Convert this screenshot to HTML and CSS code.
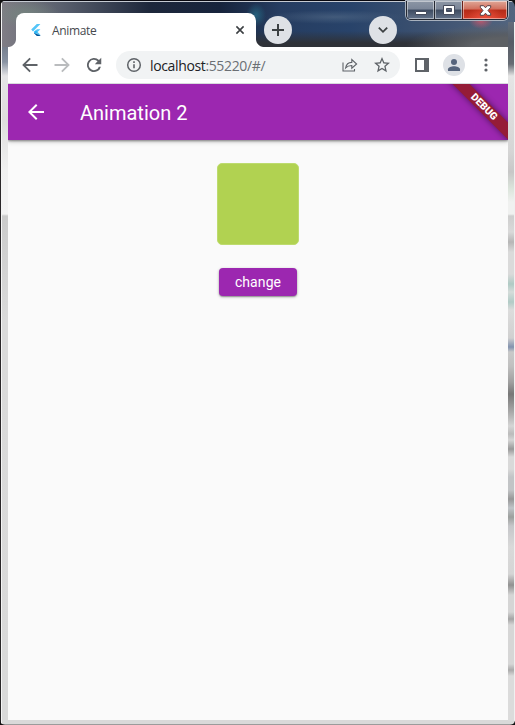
FILE: index.html
```html
<!DOCTYPE html>
<html lang="en">
<head>
<meta charset="utf-8">
<title>Animate</title>
<link rel="stylesheet" href="styles.css">
</head>
<body>
<div class="window">
  <div class="glass-right"></div>
  <header class="tabstrip">
    <div class="tab">
      <svg class="favicon" width="12" height="12" viewBox="0 0 12 12"><path fill="#54c5f8" d="M6.8 0H10.400L3 7.400 1.200 5.600zM6.800 5.200h3.600L7.600 8l2.800 2.800-2 .2L4.900 8z"/><path fill="#01579b" d="M5 8.200 6.900 10l3.500 1.500v.5H6.800L4 9.300z"/><path fill="#29b6f6" d="M3.700 8 5.600 6.200 7.500 8 5.600 9.900z"/></svg>
      <span class="tab-title">Animate</span>
      <svg class="tab-close" width="10" height="10" viewBox="0 0 10 10"><path d="M1.400 1.400l7.200 7.200M8.600 1.400L1.400 8.600" stroke="#3c4043" stroke-width="1.600"/></svg>
    </div>
    <div class="round new-tab"><svg width="12" height="12" viewBox="0 0 12 12"><path d="M6 0v12M0 6h12" stroke="#3c4043" stroke-width="2"/></svg></div>
    <div class="round search-tabs"><svg width="10" height="8" viewBox="0 0 10 8"><path d="M.8 1.600L5 5.800l4.200-4.200" fill="none" stroke="#3c4043" stroke-width="1.800"/></svg></div>
    <div class="caption">
      <div class="cap min"><svg width="12" height="6" viewBox="0 0 12 6"><path d="M.5 1.500h11v3H.5z" fill="#fff" stroke="#454b5c"/></svg></div>
      <div class="cap max"><svg width="12" height="10" viewBox="0 0 12 10"><path fill="#fff" fill-rule="evenodd" stroke="#454b5c" d="M.5.500h11v9H.5zM3.500 3.500v3h5v-3z"/></svg></div>
      <div class="cap close"><svg width="13" height="11" viewBox="0 0 13 11"><path fill="#fff" stroke="#554047" d="M1.300.700h3.300l1.900 2.100L8.400.700h3.300v1.600L9 5.500l2.700 3.200v1.600H8.400L6.500 8.200l-1.900 2.100H1.300V8.700L4 5.500 1.300 2.300z"/></svg></div>
    </div>
  </header>
  <main class="content">
    <nav class="toolbar">
      <svg class="nav-icon" width="20" height="20" viewBox="0 0 24 24"><path fill="#5f6368" d="M21 10.800H7l6-6L11.400 3.200 2.600 12l8.800 8.800L13 19.200l-6-6h14z"/></svg>
      <svg class="nav-icon" width="20" height="20" viewBox="0 0 24 24"><path fill="#babcbe" d="M3 10.800h14l-6-6 1.600-1.600 8.800 8.800-8.800 8.800-1.600-1.600 6-6H3z"/></svg>
      <svg class="nav-icon" width="20" height="20" viewBox="0 0 24 24"><path fill="#5f6368" d="M18 5.900A8.500 8.500 0 1 0 20.300 14h-2.500A6.200 6.200 0 1 1 16.300 7.600L13 11h7.700V3.200z"/></svg>
      <div class="omnibox">
        <svg class="info" width="16" height="16" viewBox="0 0 16 16"><circle cx="8" cy="8" r="6.300" fill="none" stroke="#5f6368" stroke-width="1.500"/><path d="M8 7.200v4M8 4.300v1.600" stroke="#5f6368" stroke-width="1.600"/></svg>
        <span class="url">localhost<span class="port">:55220/#/</span></span>
        <svg class="share" width="16" height="16" viewBox="0 0 16 16"><path d="M1 5.500V14h11.500v-2M3.600 11C4.200 7.500 6.400 5.500 9.800 5.400V2.600L14.600 7 9.800 11.200V8.500C7 8.500 5.200 9.200 3.600 11z" fill="none" stroke="#5f6368" stroke-width="1.100"/></svg>
        <svg class="star" width="16" height="16" viewBox="2 2 20 20"><path fill="#5f6368" d="M22 9.240l-7.190-.62L12 2 9.190 8.630 2 9.240l5.460 4.730L5.820 21 12 17.270 18.180 21l-1.630-7.030zM12 15.400l-3.760 2.270 1-4.280-3.320-2.880 4.380-.38L12 6.100l1.710 4.040 4.380.38-3.320 2.880 1 4.280z"/></svg>
      </div>
      <svg class="panel-icon" width="14" height="14" viewBox="0 0 14 14"><path fill="#5f6368" fill-rule="evenodd" d="M0 0h14v14H0zM2 2v10h7V2z"/></svg>
      <div class="avatar"><svg width="16" height="16" viewBox="0 0 16 16"><circle cx="8" cy="5" r="3" fill="#56647c"/><path fill="#56647c" d="M2 14v-1.700C2 10.200 5.500 9.300 8 9.300s6 .9 6 3V14z"/></svg></div>
      <svg class="menu" width="4" height="14" viewBox="0 0 4 14"><g fill="#5f6368"><circle cx="2" cy="2" r="1.600"/><circle cx="2" cy="7" r="1.600"/><circle cx="2" cy="12" r="1.600"/></g></svg>
    </nav>
    <section class="app">
      <div class="appbar">
        <svg width="24" height="24" viewBox="0 0 24 24"><path fill="#fff" d="M20 11H7.830l5.590-5.590L12 4l-8 8 8 8 1.410-1.410L7.830 13H20z"/></svg>
        <h1>Animation 2</h1>
        <div class="banner-clip"><div class="banner">DEBUG</div></div>
      </div>
      <div class="stage">
        <div class="box"></div>
        <button class="change">change</button>
      </div>
    </section>
  </main>
</div>
</body>
</html>
```
FILE: styles.css
```css
* { box-sizing: border-box; }
body { margin: 0; background: #111; overflow: hidden; }
svg { display: block; flex: none; }
.window {
  position: relative;
  width: 515px;
  height: 725px;
  padding: 0 7px 5px 8px;
  display: flex;
  flex-direction: column;
  overflow: hidden;
  border-radius: 7px 7px 5px 5px;
  background:
    linear-gradient(#08080f, #08080f) 0 0 / 100% 1px no-repeat,
    linear-gradient(#c5cad2, #c5cad2) 0 1px / 100% 1px no-repeat,
    linear-gradient(#2a2729, #2a2729) 0 0 / 1px 100% no-repeat,
    linear-gradient(#f4f4f4, #f4f4f4) 1px 0 / 1px 100% no-repeat,
    linear-gradient(#9b9b9b, #9b9b9b) 0 100% / 100% 1px no-repeat,
    radial-gradient(ellipse 34px 14px at 26px 14px, #75877fcc, transparent) 0 0 / 100% 47px no-repeat,
    radial-gradient(ellipse 10px 12px at 256px 15px, #267792aa, transparent) 0 0 / 100% 47px no-repeat,
    radial-gradient(ellipse 70px 7px at 335px 17px, #506784aa, transparent) 0 0 / 100% 47px no-repeat,
    radial-gradient(ellipse 12px 8px at 481px 21px, #d0566acc, transparent) 0 0 / 100% 47px no-repeat,
    radial-gradient(ellipse 110px 24px at 515px 47px, #5d6064 40%, transparent) 0 0 / 100% 47px no-repeat,
    linear-gradient(transparent 31px, #2f3238 43px) 250px 0 / 265px 47px no-repeat,
    linear-gradient(90deg, #817e86 0, #5a606e 60px, #1d273b 150px, #17243c 220px, #263d61 280px, #28436a 350px, #3b506f 420px, #53657f 515px) 0 0 / 100% 47px no-repeat,
    linear-gradient(#817e86 0, #78808f 48px, #8993a3 62px, #e4e4e6 76px, #dedddd 120px, #f0f0f0 170px, #f3f3f3 214px, #cbcbcb 216px, #dadada 320px, #d9d9d9 100%);
}
.glass-right {
  position: absolute;
  right: 0;
  top: 22px;
  width: 7px;
  height: 699px;
  border-right: 1px solid #f0f0f0;
  background: linear-gradient(#626c7b 0, #565c66 20px, #666b73 42px, #e5e5e5 54px, #d5d5d5 130px, #c7c7c7 150px, #dce5dc 167px, #f0f1f0 180px, #f0f1f0 192px, #cecece 194px, #d9d9d9 210px, #b6b6b6 220px, #dadada 230px, #dadada 252px, #afcac4 262px, #d5dcda 270px, #b1cbc6 280px, #dcdcdc 288px, #d0d0d0 316px, #8292ae 325px, #c9c9c9 330px, #c0c0c0 344px, #a0a0a0 360px, #777 372px, #a9a9a9 390px, #d5d5d5 404px, #bbb 412px, #d5d5d5 418px, #999 427px, #d9d9d9 435px, #d9d9d9 447px, #c2c4c6 455px, #c2c4c6 468px, #979797 477px, #c0c4c8 486px, #9c9f9d 495px, #c5c6c9 504px, #d9d9d9 525px, #d5d5d5 552px, #919191 563px, #d5d5d5 573px, #d5d5d5 590px, #a4a4a4 597px, #d6d6d6 603px, #d6d6d6 642px, #aaa 648px, #dbdbdb 654px, #dbdbdb 100%);
}
.tabstrip {
  position: relative;
  flex: none;
  height: 47px;
  padding: 13px 0 0 8px;
  display: flex;
}
.tab {
  position: relative;
  width: 240px;
  height: 34px;
  padding: 0 12px 0 14px;
  display: flex;
  align-items: center;
  background: #fff;
  border-radius: 8px 8px 0 0;
}
.tab::before, .tab::after {
  content: "";
  position: absolute;
  bottom: 0;
  width: 8px;
  height: 8px;
}
.tab::before { left: -8px; background: radial-gradient(circle at 0 0, transparent 7.5px, #fff 8.500px); }
.tab::after { right: -8px; background: radial-gradient(circle at 100% 0, transparent 7.5px, #fff 8.500px); }
.tab-title { flex: 1; margin-left: 10px; font: 12px "Open Sans", sans-serif; letter-spacing: -.35px; color: #46494e; }
.tab-close { margin-right: -1px; }
.round {
  width: 28px;
  height: 28px;
  margin-top: 3px;
  border-radius: 50%;
  background: #dee1e6;
  display: flex;
  align-items: center;
  justify-content: center;
}
.new-tab { margin-left: 8px; }
.search-tabs { margin-left: 77px; }
.caption {
  position: absolute;
  top: 1px;
  right: 0;
  width: 102px;
  height: 19px;
  display: flex;
  border: 1px solid #242832;
  border-top: 0;
  border-radius: 0 0 5px 5px;
  box-shadow: 0 0 0 1px #a8b1bd;
  overflow: hidden;
}
.cap { display: flex; align-items: center; justify-content: center; box-shadow: inset 0 0 0 1px #ffffff77; }
.min, .max { width: 27px; background: linear-gradient(#8c96a5 0, #7b8698 45%, #3d4a60 50%, #64738a); }
.min { padding-top: 5px; width: 28px; border-right: 1px solid #242832; }
.close { flex: 1; border-left: 1px solid #6c2119; background: radial-gradient(ellipse at 50% 115%, #f05340, transparent 60%), linear-gradient(#e0a797 0, #d0705e 45%, #b52b18 50%, #d03a26); }
.content { position: relative; flex: 1; width: 500px; display: flex; flex-direction: column; background: #fafafa; }
.toolbar {
  height: 37px;
  padding-left: 12px;
  display: flex;
  align-items: center;
  border-bottom: 1px solid #d9dbdd;
  background: #fff;
}
.nav-icon { margin-right: 12px; }
.omnibox {
  width: 284px;
  height: 28px;
  padding: 0 10px;
  display: flex;
  align-items: center;
  border-radius: 14px;
  background: #f1f3f4;
}
.url { flex: 1; margin-left: 8px; font: 14px "Open Sans", sans-serif; letter-spacing: -.36px; color: #202124; white-space: nowrap; }
.port { color: #6b6f74; }
.share { margin-right: 16px; }
.panel-icon { margin-left: 15px; }
.avatar {
  width: 22px;
  height: 22px;
  margin-left: 14px;
  border-radius: 50%;
  background: #dee1e6;
  display: flex;
  align-items: center;
  justify-content: center;
}
.menu { margin-left: 19px; }
.app { flex: 1; font-family: Roboto, sans-serif; }
.appbar {
  position: relative;
  height: 56px;
  padding-left: 16px;
  display: flex;
  align-items: center;
  background: #9c27b0;
  box-shadow: 0 1px 5px #0000004d, 0 1px 2px #00000059;
  clip-path: inset(0 0 -12px 0);
}
h1 { margin: 2px 0 0 32px; font-size: 20px; font-weight: 400; line-height: 24px; letter-spacing: 0; color: #fff; }
.banner-clip { position: absolute; top: 0; right: 0; width: 70px; height: 56px; overflow: hidden; }
.banner {
  position: absolute;
  top: 17px;
  right: -29px;
  width: 106px;
  height: 12px;
  transform: rotate(45deg);
  background: #951c37;
  box-shadow: 0 0 6px #0000007f;
  font: 900 10.200px/12px Roboto, sans-serif;
  text-align: center;
  color: #fff;
}
.stage { padding-top: 23px; display: flex; flex-direction: column; align-items: center; }
.box { width: 82px; height: 82px; border: 1px solid #bddb6e; border-radius: 5px; background: #b1d251; }
.change {
  width: 78px;
  height: 28px;
  margin-top: 23px;
  padding: 0;
  border: 0;
  border-radius: 4px;
  background: #9c27b0;
  box-shadow: 0 1px 3px #00000055, 0 1px 1px #00000033;
  color: #fff;
  font: 400 14px Roboto, sans-serif;
  letter-spacing: .08px;
}
```
